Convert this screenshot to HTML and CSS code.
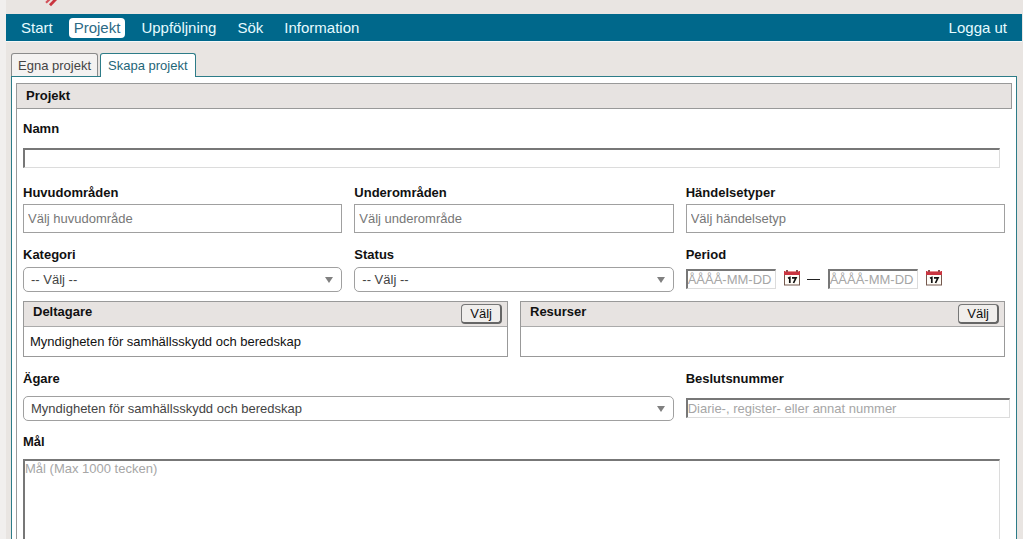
FILE: index.html
```html
<!DOCTYPE html>
<html lang="sv">
<head>
<meta charset="utf-8">
<title>Skapa projekt</title>
<link rel="stylesheet" href="styles.css">
</head>
<body>
<div class="page">
  <header class="brand">
    <svg class="logo" width="20" height="7" viewBox="0 0 20 7" aria-hidden="true">
      <path d="M2 2.800 6.500 -1.500" fill="none" stroke="#d4525a" stroke-width="2.200"/>
      <path d="M6 5.300 12.500 -1.500" fill="none" stroke="#c9353f" stroke-width="2.800"/>
    </svg>
  </header>
  <nav class="nav">
    <a class="nav-link" href="#">Start</a>
    <a class="nav-link nav-link-active" href="#">Projekt</a>
    <a class="nav-link" href="#">Uppföljning</a>
    <a class="nav-link" href="#">Sök</a>
    <a class="nav-link" href="#">Information</a>
    <a class="nav-link nav-logout" href="#">Logga ut</a>
  </nav>
  <main class="content">
    <div class="tabs">
      <a class="tab" href="#">Egna projekt</a>
      <a class="tab tab-active" href="#">Skapa projekt</a>
    </div>
    <div class="panel">
      <form class="section">
        <h2 class="section-title">Projekt</h2>
        <div class="section-body">
          <div class="field field-name">
            <label class="label" for="namn">Namn</label>
            <input class="inset" id="namn" type="text">
          </div>
          <div class="row row-areas">
            <div class="field field-near">
              <label class="label" for="huvud">Huvudområden</label>
              <input class="picker" id="huvud" type="text" placeholder="Välj huvudområde">
            </div>
            <div class="field field-near">
              <label class="label" for="under">Underområden</label>
              <input class="picker" id="under" type="text" placeholder="Välj underområde">
            </div>
            <div class="field field-near">
              <label class="label" for="typer">Händelsetyper</label>
              <input class="picker" id="typer" type="text" placeholder="Välj händelsetyp">
            </div>
          </div>
          <div class="row">
            <div class="field field-near">
              <label class="label" for="kategori">Kategori</label>
              <div class="select-wrap"><select class="select" id="kategori"><option>-- Välj --</option></select></div>
            </div>
            <div class="field field-near">
              <label class="label" for="status">Status</label>
              <div class="select-wrap"><select class="select" id="status"><option>-- Välj --</option></select></div>
            </div>
            <div class="field field-near">
              <label class="label" for="from">Period</label>
              <div class="period">
                <input class="inset date" id="from" type="text" placeholder="ÅÅÅÅ-MM-DD">
                <button class="calendar" type="button" aria-label="Välj startdatum">
                  <svg width="16" height="16" viewBox="0 0 16 16" aria-hidden="true">
                    <rect x=".5" y="2.500" width="15" height="12.500" fill="#fffdf8" stroke="#75594f"/>
                    <path d="M0 1h16v4H0z" fill="#c93440"/>
                    <path d="M1 1h14v1H1z" fill="#e88a8c"/>
                    <path d="M2 0h2v2H2zM12 0h2v2h-2z" fill="#8d4d4d"/>
                    <path d="M4 8.300 5.800 7.500V13M8 7.800h4L9.500 13" fill="none" stroke="#111" stroke-width="1.700"/>
                  </svg>
                </button>
                <span class="dash"></span>
                <input class="inset date" type="text" aria-label="Slutdatum" placeholder="ÅÅÅÅ-MM-DD">
                <button class="calendar" type="button" aria-label="Välj slutdatum">
                  <svg width="16" height="16" viewBox="0 0 16 16" aria-hidden="true">
                    <rect x=".5" y="2.500" width="15" height="12.500" fill="#fffdf8" stroke="#75594f"/>
                    <path d="M0 1h16v4H0z" fill="#c93440"/>
                    <path d="M1 1h14v1H1z" fill="#e88a8c"/>
                    <path d="M2 0h2v2H2zM12 0h2v2h-2z" fill="#8d4d4d"/>
                    <path d="M4 8.300 5.800 7.500V13M8 7.800h4L9.500 13" fill="none" stroke="#111" stroke-width="1.700"/>
                  </svg>
                </button>
              </div>
            </div>
          </div>
          <div class="boxes">
            <section class="box">
              <div class="box-head">
                <h3 class="box-title">Deltagare</h3>
                <button class="button" type="button">Välj</button>
              </div>
              <p class="box-body">Myndigheten för samhällsskydd och beredskap</p>
            </section>
            <section class="box">
              <div class="box-head">
                <h3 class="box-title">Resurser</h3>
                <button class="button" type="button">Välj</button>
              </div>
              <p class="box-body"></p>
            </section>
          </div>
          <div class="row">
            <div class="field field-wide">
              <label class="label" for="agare">Ägare</label>
              <div class="select-wrap"><select class="select" id="agare"><option>Myndigheten för samhällsskydd och beredskap</option></select></div>
            </div>
            <div class="field field-number">
              <label class="label" for="beslut">Beslutsnummer</label>
              <input class="inset" id="beslut" type="text" placeholder="Diarie-, register- eller annat nummer">
            </div>
          </div>
          <div class="field field-goal">
            <label class="label" for="mal">Mål</label>
            <textarea class="inset goal" id="mal" placeholder="Mål (Max 1000 tecken)"></textarea>
          </div>
        </div>
      </form>
    </div>
  </main>
</div>
</body>
</html>
```
FILE: styles.css
```css
* {
  box-sizing: border-box;
}

html {
  scrollbar-width: none;
}

body {
  margin: 0;
  background: #f1efee;
  color: #111;
  font: 13px/16px "Liberation Sans", Arial, sans-serif;
}

.page {
  margin-left: 6px;
  min-height: 100vh;
  background: #e9e5e2;
}

.brand {
  height: 14px;
  padding-left: 38px;
}

.logo {
  display: block;
}

.nav {
  display: flex;
  align-items: center;
  gap: 11px;
  height: 28px;
  margin-right: 1px;
  padding: 0 10px;
  background: #00688b;
  border-bottom: 1px solid #f5f8f8;
}

.nav-link {
  padding: 0 5px;
  border-radius: 4px;
  color: #e6fbff;
  font-size: 15px;
  line-height: 20px;
  text-decoration: none;
}

.nav-logout {
  margin-left: auto;
}

.nav-link-active {
  background: #fff;
  color: #2c6a85;
}

.content {
  padding: 11px 6px 0 5px;
}

.tabs {
  display: flex;
  align-items: flex-end;
  gap: 2px;
}

.tab {
  height: 23px;
  padding: 3px 6px 0;
  border: 1px solid #8b8b8b;
  border-bottom: 0;
  border-radius: 3px 3px 0 0;
  background: #f4f2f1;
  color: #444;
  line-height: 18px;
  text-decoration: none;
}

.tab-active {
  position: relative;
  height: 24px;
  margin-bottom: -1px;
  padding: 3px 7px 0;
  border-color: #2d7c88;
  background: #fff;
  color: #1f6678;
}

.panel {
  padding: 6px 4px 8px;
  border: 1px solid #2d7c88;
  background: #fff;
}

.section {
  border-left: 1px solid #999;
}

.section-title {
  margin: 0 0 0 -1px;
  padding: 4px 10px 4px 9px;
  border: 1px solid #999;
  background: #e7e3e1;
  font-size: 13px;
  line-height: 16px;
}

.section-body {
  padding: 12px 7px 8px 6px;
}

.field {
  display: flex;
  flex-direction: column;
  gap: 9px;
  min-width: 0;
}

.field-name {
  gap: 11px;
  margin-right: 5px;
}

.field-near {
  gap: 4px;
}

.label {
  font-weight: bold;
}

.row {
  display: grid;
  grid-template-columns: repeat(3, minmax(0, 1fr));
  gap: 12px;
  margin-top: 14px;
}

.row-areas {
  margin-top: 17px;
}

.row-areas .field-near {
  gap: 3px;
}

.field-wide {
  grid-column: span 2;
}

.inset,
.picker,
.select {
  width: 100%;
  margin: 0;
  border-radius: 0;
  outline: 0;
  background: #fff;
  font: inherit;
}

.inset {
  height: 20px;
  padding: 0;
  border: 1px solid #dcdcdc;
  border-top: 2px solid #777;
  border-left: 2px solid #777;
}

.inset::placeholder {
  color: #a6a6a6;
  opacity: 1;
}

.picker {
  height: 29px;
  padding: 0 4px;
  border: 1px solid #a0a0a0;
}

.picker::placeholder {
  color: #777;
  opacity: 1;
}

.select-wrap {
  display: grid;
  align-items: center;
}

.select-wrap::after {
  grid-area: 1 / 1;
  justify-self: end;
  margin-right: 9px;
  border: 4px solid transparent;
  border-top: 6px solid #808080;
  border-bottom: 0;
  content: "";
  pointer-events: none;
}

.select {
  grid-area: 1 / 1;
  height: 25px;
  padding: 0 24px 0 7px;
  border: 1px solid #a0a0a0;
  border-radius: 5px;
  appearance: none;
  color: #444;
}

.period {
  display: flex;
  align-items: center;
  height: 24px;
}

.date {
  flex: none;
  width: 90px;
}

.calendar {
  display: block;
  height: 20px;
  margin-left: 8px;
  padding: 0;
  border: 0;
  background: none;
}

.dash {
  width: 13px;
  margin: 0 8px 0 7px;
  border-top: 1px solid #222;
}

.boxes {
  display: grid;
  grid-template-columns: 1fr 1fr;
  gap: 12px;
  margin-top: 9px;
}

.box {
  border: 1px solid #999;
}

.box-head {
  display: flex;
  justify-content: space-between;
  height: 25px;
  padding: 2px 5px 0 9px;
  border-bottom: 1px solid #aaa;
  background: #e7e3e1;
}

.box-title {
  margin: 0;
  font-size: 13px;
  line-height: 16px;
}

.button {
  height: 20px;
  padding: 0 8px;
  border: 1px solid #777;
  border-right: 2px solid #666;
  border-bottom: 2px solid #666;
  border-radius: 4px;
  background: #f0eeec;
  color: #111;
  font: 13px/16px "Liberation Sans", Arial, sans-serif;
}

.box-body {
  min-height: 29px;
  margin: 0;
  padding: 7px 6px 6px;
}

.field-number {
  gap: 11px;
  margin-right: -5px;
}

.field-goal {
  margin: 13px 5px 0 0;
}

.goal {
  display: block;
  height: 120px;
  resize: none;
}
```
